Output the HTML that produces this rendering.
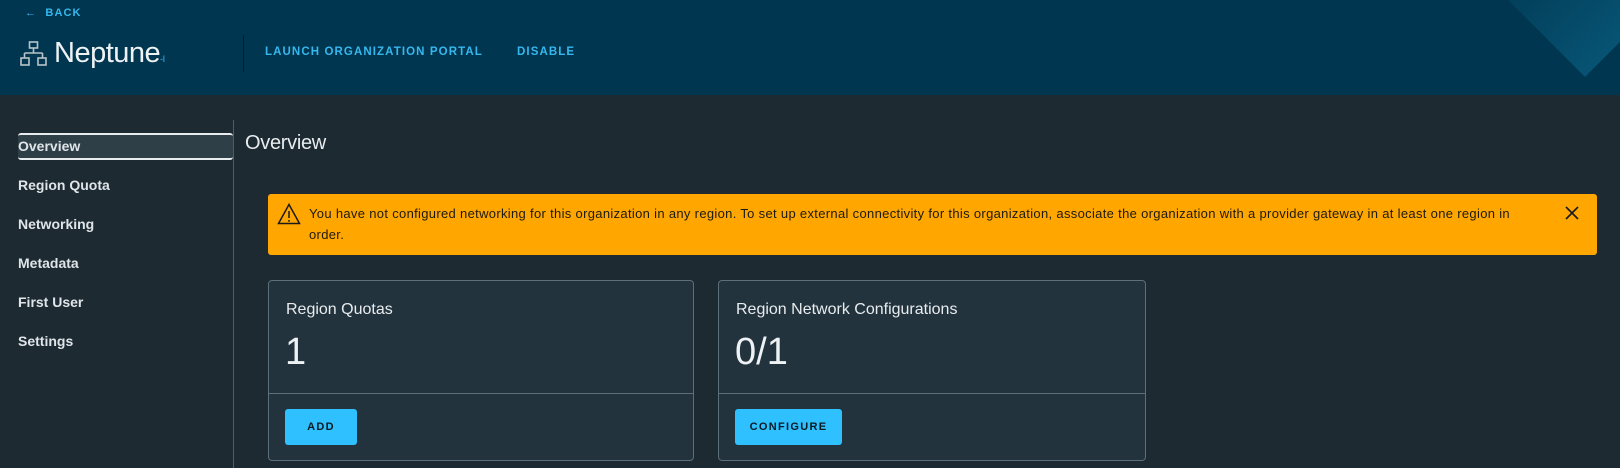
<!DOCTYPE html>
<html><head><meta charset="utf-8"><style>
*{margin:0;padding:0;box-sizing:border-box}
body{width:1620px;height:468px;overflow:hidden;background:#1d2a32;font-family:"Liberation Sans",sans-serif;position:relative}
.hdr{position:absolute;left:0;top:0;width:1620px;height:95px;background:#00364f;overflow:hidden}
.abs{position:absolute;white-space:nowrap}
.lnk{color:#36b8ef;font-weight:bold;font-size:11.5px;letter-spacing:1.1px}
.side{font-weight:bold;font-size:14px;color:#dfe5e8}
.card{position:absolute;top:280px;height:181px;background:#22333d;border:1px solid #5c6f7a;border-radius:4px}
.card .t{position:absolute;left:17px;top:20px;font-size:16px;color:#e8ecee}
.card .n{position:absolute;left:16px;top:50px;font-size:38px;color:#eef2f4}
.card .d{position:absolute;left:0;right:0;top:112px;border-top:1px solid #5c6f7a}
.btn{position:absolute;top:128px;left:16px;height:36px;background:#2ec0ff;border-radius:3px;color:#0b1a22;font-weight:bold;font-size:11px;letter-spacing:1.3px;text-align:center;line-height:36px}
</style></head><body>
<div class="hdr">
  <div class="abs" style="left:1520px;top:-80px;width:130px;height:130px;background:linear-gradient(90deg,rgba(10,90,125,0.15),rgba(10,95,130,0.7));transform:rotate(45deg)"></div>
  <div class="abs lnk" style="left:25px;top:7px;font-size:11px">←&nbsp;&nbsp;BACK</div>
  <svg class="abs" style="left:20px;top:41px" width="27" height="26" viewBox="0 0 27 26" fill="none" stroke="#b9c4ca" stroke-width="1.6"><rect x="9.5" y="1" width="8" height="6"/><path d="M13.5 7v5M4.5 12h18M4.5 12v5M22.5 12v5"/><rect x="1" y="17" width="8" height="7"/><rect x="18" y="17" width="8" height="7"/></svg>
  <div class="abs" style="left:54px;top:37px;font-size:29px;color:#eef2f4;letter-spacing:-0.5px">Neptune<span style="font-size:9px;color:#36b8ef">-I</span></div>
  <div class="abs" style="left:243px;top:35px;width:1px;height:37px;background:#0b1a22"></div>
  <div class="abs lnk" style="left:265px;top:46px">LAUNCH ORGANIZATION PORTAL</div>
  <div class="abs lnk" style="left:517px;top:46px">DISABLE</div>
</div>
<div class="abs" style="left:233px;top:120px;width:1px;height:348px;background:#4d5c65"></div>
<div class="abs" style="left:18px;top:133px;width:215px;height:27px;background:#2e3f47;border-top:2px solid #e8ecee;border-bottom:2px solid #e8ecee;border-radius:3px"></div>
<div class="abs side" style="left:18px;top:138px">Overview</div>
<div class="abs side" style="left:18px;top:177px">Region Quota</div>
<div class="abs side" style="left:18px;top:216px">Networking</div>
<div class="abs side" style="left:18px;top:255px">Metadata</div>
<div class="abs side" style="left:18px;top:294px">First User</div>
<div class="abs side" style="left:18px;top:333px">Settings</div>
<div class="abs" style="left:245px;top:132px;font-size:20px;color:#e8ecee;letter-spacing:-0.3px">Overview</div>
<div class="abs" style="left:268px;top:194px;width:1329px;height:61px;background:#ffa700;border-radius:3px">
  <svg class="abs" style="left:9px;top:9px" width="24" height="22" viewBox="0 0 24 22" fill="none" stroke="#1a1a1a" stroke-width="1.5"><path d="M12 1.5L1.5 20.5h21z"/><path d="M12 8v7M12 17v1.8"/></svg>
  <div class="abs" style="left:41px;top:9px;font-size:13px;line-height:21px;color:#1e1a10;letter-spacing:0.32px">You have not configured networking for this organization in any region. To set up external connectivity for this organization, associate the organization with a provider gateway in at least one region in<br>order.</div>
  <svg class="abs" style="left:1297px;top:12px" width="14" height="14" viewBox="0 0 14 14" stroke="#1a1a1a" stroke-width="1.6"><path d="M1 1l12 12M13 1L1 13"/></svg>
</div>
<div class="card" style="left:268px;width:426px"><div class="t">Region Quotas</div><div class="n">1</div><div class="d"></div><div class="btn" style="width:72px">ADD</div></div>
<div class="card" style="left:718px;width:428px"><div class="t">Region Network Configurations</div><div class="n">0/1</div><div class="d"></div><div class="btn" style="width:107px">CONFIGURE</div></div>
</body></html>
